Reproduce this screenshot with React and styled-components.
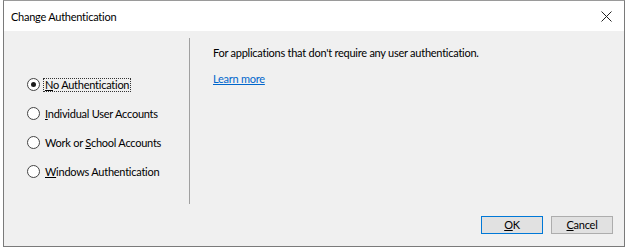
import React from "react";
import styled, { createGlobalStyle } from "styled-components";

const Global = createGlobalStyle`
  html, body { margin: 0; padding: 0; background: #ffffff; }
  body { font-family: Lato, "Noto Sans", sans-serif; font-size: 11px; letter-spacing: -0.25px; color: #000; }
`;

const Window = styled.div`
  box-sizing: border-box;
  margin-left: 3px;
  width: 622px;
  height: 247px;
  border: 1px solid #7a7a7a;
  border-top-color: #9a9a9a;
  display: flex;
  flex-direction: column;
  background: #f0f0f0;
`;

const TitleBar = styled.div`
  height: 30px;
  background: #ffffff;
  display: flex;
  align-items: center;
  justify-content: space-between;
  padding: 0 0 0 7px;
  font-size: 11px;
`;

const CloseBtn = styled.div`
  width: 30px;
  height: 30px;
  display: flex;
  align-items: center;
  justify-content: center;
  margin-right: 3px;
`;

const Body = styled.div`
  flex: 1;
  display: flex;
  flex-direction: column;
`;

const Main = styled.div`
  display: flex;
  margin-top: 7px;
  height: 166px;
`;

const LeftPanel = styled.div`
  box-sizing: border-box;
  width: 186px;
  border-right: 1px solid #a0a0a0;
  padding: 32px 0 0 23px;
  display: flex;
  flex-direction: column;
`;

const RadioRow = styled.label`
  display: flex;
  align-items: center;
  height: 29px;
  font-size: 11px;
`;

const Circle = styled.span`
  box-sizing: border-box;
  width: 13px;
  height: 13px;
  border-radius: 50%;
  border: 1px solid #444;
  background: #fff;
  display: flex;
  align-items: center;
  justify-content: center;
  margin-right: 3px;
  &::after {
    content: "";
    width: 5px;
    height: 5px;
    border-radius: 50%;
    background: ${p => (p.$checked ? "#1a1a1a" : "transparent")};
  }
`;

const Label = styled.span`
  padding: 0 1px;
  line-height: 12px;
  border: 1px dotted ${p => (p.$focus ? "#333" : "transparent")};
  u { text-decoration: underline; text-underline-offset: 1px; }
`;

const RightPanel = styled.div`
  flex: 1;
  padding: 7px 0 0 23px;
  display: flex;
  flex-direction: column;
  gap: 10px;
`;

const Text = styled.div`
  line-height: 16px;
  font-size: 11px;
`;

const Link = styled.a`
  line-height: 16px;
  font-size: 11px;
  color: #0066cc;
  text-decoration: underline;
  width: fit-content;
`;

const Footer = styled.div`
  flex: 1;
  display: flex;
  justify-content: flex-end;
  align-items: flex-start;
  padding: 12px 11px 0 0;
  gap: 8px;
`;

const Button = styled.button`
  box-sizing: border-box;
  width: 62px;
  height: 18px;
  padding: 0;
  font-family: inherit;
  font-size: 11px;
  letter-spacing: inherit;
  background: #e1e1e1;
  border: 1px solid ${p => (p.$default ? "#0078d7" : "#adadad")};
  color: #000;
  line-height: 14px;
`;

const options = [
  { key: "none", text: <><u>N</u>o Authentication</>, checked: true },
  { key: "ind", text: <><u>I</u>ndividual User Accounts</> },
  { key: "work", text: <>Work or <u>S</u>chool Accounts</> },
  { key: "win", text: <><u>W</u>indows Authentication</> },
];

export default function App() {
  return (
    <>
      <Global />
      <Window>
        <TitleBar>
          <span>Change Authentication</span>
          <CloseBtn>
            <svg width="11" height="11" viewBox="0 0 11 11">
              <path d="M0.5 0.5 L10.5 10.5 M10.5 0.5 L0.5 10.5" stroke="#222" strokeWidth="1" />
            </svg>
          </CloseBtn>
        </TitleBar>
        <Body>
          <Main>
            <LeftPanel>
              {options.map(o => (
                <RadioRow key={o.key}>
                  <Circle $checked={o.checked} />
                  <Label $focus={o.checked}>{o.text}</Label>
                </RadioRow>
              ))}
            </LeftPanel>
            <RightPanel>
              <Text>For applications that don't require any user authentication.</Text>
              <Link href="#">Learn more</Link>
            </RightPanel>
          </Main>
          <Footer>
            <Button $default><u>O</u>K</Button>
            <Button><u>C</u>ancel</Button>
          </Footer>
        </Body>
      </Window>
    </>
  );
}
